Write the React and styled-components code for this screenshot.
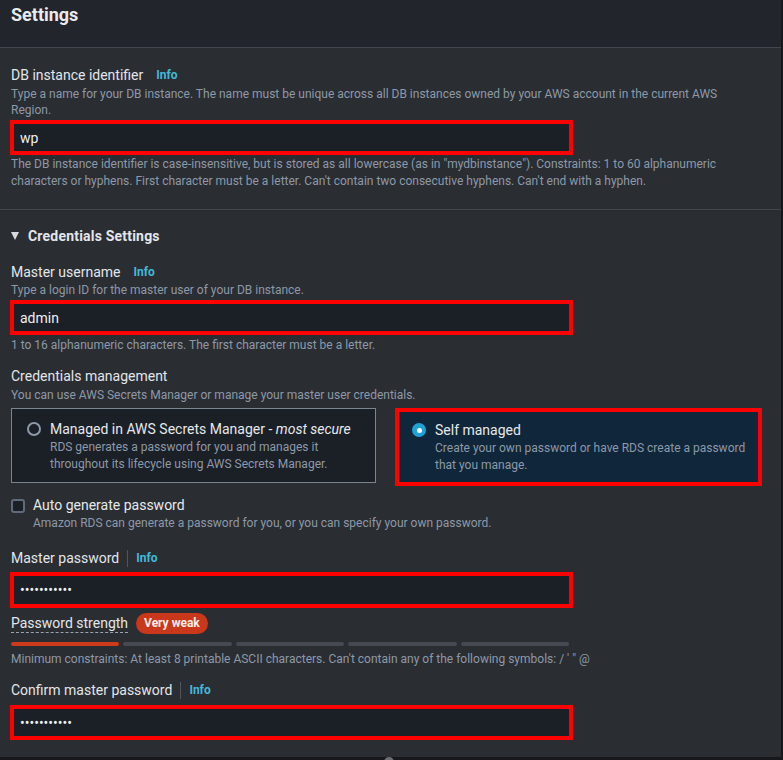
import React from "react";
import styled, { createGlobalStyle } from "styled-components";

const Global = createGlobalStyle`
  html, body { margin: 0; padding: 0; background: #16181c; }
  body { font-family: Roboto, "Liberation Sans", Arial, sans-serif; }
  * { box-sizing: border-box; }
`;

const Page = styled.div`
  position: relative;
  width: 783px;
  height: 760px;
  background: #16181c;
  overflow: hidden;
`;

const Panel = styled.div`
  width: 781px;
  height: 757px;
  background: #2a2d32;
  overflow: hidden;
`;

const Header = styled.div`
  height: 48px;
  padding: 4px 11px 0;
  background: #22252b;
  border-bottom: 1px solid #42474f;
`;

const Title = styled.h2`
  margin: 0;
  font-size: 18px;
  line-height: 22px;
  font-weight: 700;
  color: #e9ebed;
`;

const Section = styled.div`
  padding: ${(p) => p.$pt}px 30px ${(p) => p.$pb}px 11px;
  border-bottom: ${(p) => (p.$divider ? "1px solid #42474f" : "none")};
`;

const Block = styled.div`
  margin-top: ${(p) => p.$mt || 0}px;
`;

const LabelRow = styled.div`
  display: flex;
  align-items: center;
  height: 20px;
`;

const Label = styled.span`
  font-size: 14px;
  line-height: 20px;
  color: #e3e6ea;
`;

const InfoLink = styled.a`
  font-size: 12px;
  font-weight: 700;
  color: #44b8d8;
  margin-left: ${(p) => (p.$divided ? 0 : 13)}px;
  text-decoration: none;
`;

const Divider = styled.span`
  width: 1px;
  height: 17px;
  background: #50565e;
  margin: 0 8px 0 8px;
`;

const Desc = styled.div`
  font-size: 12px;
  line-height: ${(p) => p.$lh || 16}px;
  color: #8d99a8;
  margin-top: ${(p) => p.$mt || 0}px;
`;

const Input = styled.input`
  display: block;
  width: 563px;
  height: ${(p) => p.$h || 35}px;
  margin: ${(p) => p.$mt || 0}px 0 0 -1px;
  padding: 0 6px;
  background: #1b1f26;
  border: 4px solid #ff0000;
  border-radius: 0;
  outline: none;
  color: #eef0f2;
  font-family: inherit;
  font-size: 14px;
`;

const Expander = styled.div`
  display: flex;
  align-items: center;
  height: 20px;
  gap: 9px;
  font-size: 14px;
  font-weight: 700;
  color: #e3e6ea;
  letter-spacing: 0.2px;
`;

const Caret = styled.span`
  width: 0;
  height: 0;
  border-left: 4.5px solid transparent;
  border-right: 4.5px solid transparent;
  border-top: 8px solid #d5dbe1;
`;

const Tiles = styled.div`
  display: grid;
  grid-template-columns: 365px 367px;
  column-gap: 19px;
  align-items: start;
  margin-top: 5px;
`;

const Tile = styled.label`
  display: flex;
  align-items: flex-start;
  gap: 9px;
  height: ${(p) => (p.$selected ? 78 : 75)}px;
  padding: ${(p) => (p.$selected ? "8px 12px 0 13px" : "10px 12px 0 15px")};
  background: ${(p) => (p.$selected ? "#10263a" : "#1b1f26")};
  border: ${(p) => (p.$selected ? "4px solid #ff0000" : "1px solid #7b8590")};
`;

const Radio = styled.span`
  flex: none;
  width: 14px;
  height: 14px;
  margin-top: 3px;
  border-radius: 50%;
  display: flex;
  align-items: center;
  justify-content: center;
  border: ${(p) => (p.$checked ? "none" : "2px solid #8d99a8")};
  background: ${(p) => (p.$checked ? "#1fa2d6" : "transparent")};
  &::after {
    content: "";
    display: ${(p) => (p.$checked ? "block" : "none")};
    width: 5px;
    height: 5px;
    border-radius: 50%;
    background: #ffffff;
  }
`;

const TileText = styled.div`
  display: flex;
  flex-direction: column;
`;

const TileTitle = styled.span`
  font-size: 14px;
  line-height: 20px;
  color: #e6e9ec;
  em { font-style: italic; }
`;

const CheckRow = styled.div`
  display: flex;
  align-items: flex-start;
  gap: 8px;
  margin-top: 9px;
`;

const Checkbox = styled.span`
  flex: none;
  width: 14px;
  height: 14px;
  margin-top: 4px;
  border: 2px solid #5f6b7a;
  border-radius: 3px;
  background: #1b1f26;
`;

const StrengthRow = styled.div`
  display: flex;
  align-items: center;
  height: 21px;
  margin-top: 5px;
`;

const StrengthLabel = styled.span`
  font-size: 14px;
  line-height: 17px;
  color: #e3e6ea;
  border-bottom: 1px dashed #9aa5b1;
  margin-top: 1px;
`;

const Badge = styled.span`
  margin-left: 8px;
  height: 21px;
  padding: 0 8px;
  border-radius: 11px;
  background: #c9381b;
  color: #fdeeea;
  font-size: 12px;
  font-weight: 700;
  line-height: 21px;
`;

const Meter = styled.div`
  display: grid;
  grid-template-columns: repeat(5, 1fr);
  gap: 4px;
  width: 558px;
  margin-top: 8px;
`;

const Segment = styled.span`
  height: 4px;
  border-radius: 2px;
  background: ${(p) => (p.$on ? "#cf3a1a" : "#454a52")};
`;

const ScrollKnob = styled.span`
  position: absolute;
  left: 384px;
  top: 757px;
  width: 10px;
  height: 10px;
  border-radius: 50%;
  background: #6b6f75;
`;

export default function App() {
  return (
    <Page>
      <Global />
      <Panel>
        <Header>
          <Title>Settings</Title>
        </Header>

        <Section $pt={17} $pb={19} $divider>
          <LabelRow>
            <Label>DB instance identifier</Label>
            <InfoLink>Info</InfoLink>
          </LabelRow>
          <Desc $mt={1}>
            Type a name for your DB instance. The name must be unique across all DB instances owned by your AWS account in the current AWS Region.
          </Desc>
          <Input $mt={2} readOnly value="wp" />
          <Desc $lh={17} $mt={1}>
            The DB instance identifier is case-insensitive, but is stored as all lowercase (as in "mydbinstance"). Constraints: 1 to 60 alphanumeric characters or hyphens. First character must be a letter. Can't contain two consecutive hyphens. Can't end with a hyphen.
          </Desc>
        </Section>

        <Section $pt={16} $pb={0}>
          <Expander>
            <Caret />
            Credentials Settings
          </Expander>

          <Block $mt={16}>
            <LabelRow>
              <Label>Master username</Label>
              <InfoLink>Info</InfoLink>
            </LabelRow>
            <Desc>Type a login ID for the master user of your DB instance.</Desc>
            <Input $mt={2} readOnly value="admin" />
            <Desc $lh={17} $mt={2}>1 to 16 alphanumeric characters. The first character must be a letter.</Desc>
          </Block>

          <Block $mt={12}>
            <LabelRow>
              <Label>Credentials management</Label>
            </LabelRow>
            <Desc $mt={1}>You can use AWS Secrets Manager or manage your master user credentials.</Desc>
            <Tiles>
              <Tile>
                <Radio />
                <TileText>
                  <TileTitle>
                    Managed in AWS Secrets Manager - <em>most secure</em>
                  </TileTitle>
                  <Desc $lh={17}>
                    RDS generates a password for you and manages it throughout its lifecycle using AWS Secrets Manager.
                  </Desc>
                </TileText>
              </Tile>
              <Tile $selected>
                <Radio $checked />
                <TileText>
                  <TileTitle>Self managed</TileTitle>
                  <Desc $lh={17}>
                    Create your own password or have RDS create a password that you manage.
                  </Desc>
                </TileText>
              </Tile>
            </Tiles>
          </Block>

          <CheckRow>
            <Checkbox />
            <TileText>
              <TileTitle>Auto generate password</TileTitle>
              <Desc>Amazon RDS can generate a password for you, or you can specify your own password.</Desc>
            </TileText>
          </CheckRow>

          <Block $mt={17}>
            <LabelRow>
              <Label>Master password</Label>
              <Divider />
              <InfoLink $divided>Info</InfoLink>
            </LabelRow>
            <Input $mt={4} $h={36} readOnly type="password" value="xxxxxxxxxxx" />
            <StrengthRow>
              <StrengthLabel>Password strength</StrengthLabel>
              <Badge>Very weak</Badge>
            </StrengthRow>
            <Meter>
              <Segment $on />
              <Segment />
              <Segment />
              <Segment />
              <Segment />
            </Meter>
            <Desc $mt={5}>
              Minimum constraints: At least 8 printable ASCII characters. Can't contain any of the following symbols: / ' " @
            </Desc>
          </Block>

          <Block $mt={13}>
            <LabelRow>
              <Label>Confirm master password</Label>
              <Divider />
              <InfoLink $divided>Info</InfoLink>
            </LabelRow>
            <Input $mt={5} readOnly type="password" value="xxxxxxxxxxx" />
          </Block>
        </Section>
      </Panel>
      <ScrollKnob />
    </Page>
  );
}
